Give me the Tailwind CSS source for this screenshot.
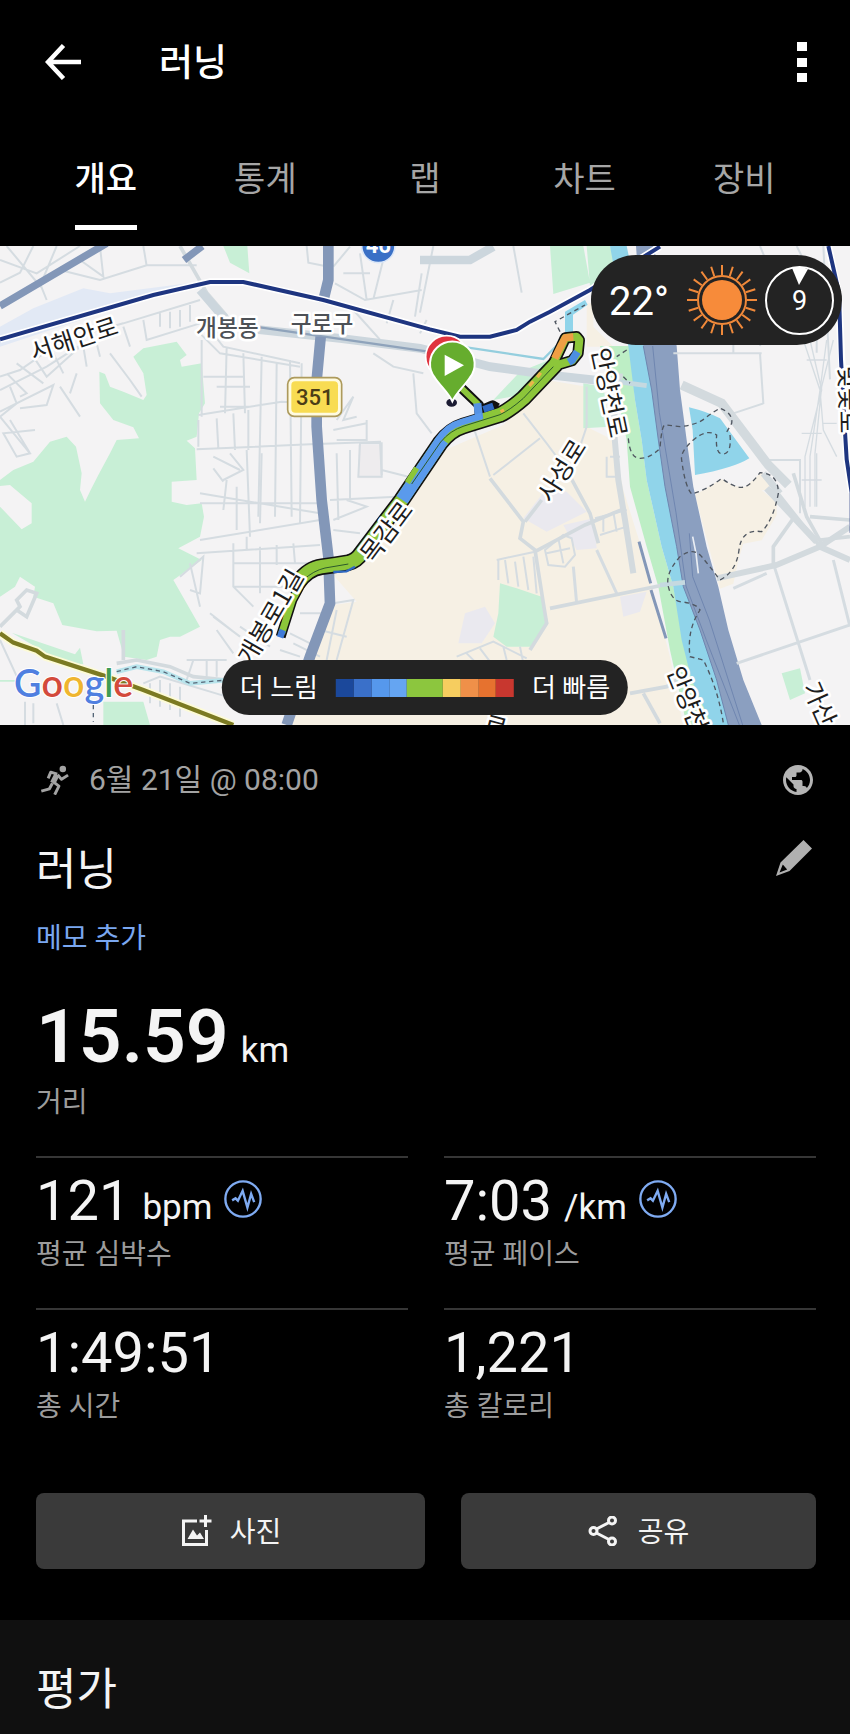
<!DOCTYPE html>
<html lang="ko">
<head>
    <meta charset="UTF-8">
    <meta name="viewport" content="width=device-width, initial-scale=1.0">
    <title>러닝</title>
    <script src="https://cdn.jsdelivr.net/npm/@tailwindcss/browser@4"></script>
</head>
<body class="bg-black text-[#f4f4f4] font-[Roboto,'Noto_Sans_CJK_KR',sans-serif]">

    <!-- App bar -->
    <header class="flex items-center h-[124px] pl-[41px] pr-[38px]">
        <button aria-label="뒤로" class="w-11 h-11 flex items-center justify-center">
            <svg class="w-9 h-9" viewBox="0 0 36 36" fill="none" stroke="#fff" stroke-width="4.500">
                <path d="M18.500 1.500L3 18l15.500 16.500M3 18h33"/>
            </svg>
        </button>
        <h1 class="ml-[74px] pt-1 text-[37px] leading-[48px] font-medium text-white">러닝</h1>
        <button aria-label="더보기" class="ml-auto w-5 h-11 flex flex-col items-center justify-between py-0.5">
            <span class="w-2.5 h-[9px] bg-white"></span>
            <span class="w-2.5 h-[9px] bg-white"></span>
            <span class="w-2.5 h-[9px] bg-white"></span>
        </button>
    </header>

    <!-- Tabs -->
    <nav class="grid grid-cols-5 px-[26px] pb-4 text-[34px] leading-[40px] text-[#a6a6a6]">
        <button class="flex justify-center h-[106px]"><span class="flex items-center h-full pt-1 border-y-[5px] border-t-transparent border-b-white text-white font-medium">개요</span></button>
        <button class="flex justify-center h-[106px]"><span class="flex items-center h-full pt-1">통계</span></button>
        <button class="flex justify-center h-[106px]"><span class="flex items-center h-full pt-1">랩</span></button>
        <button class="flex justify-center h-[106px]"><span class="flex items-center h-full pt-1">차트</span></button>
        <button class="flex justify-center h-[106px]"><span class="flex items-center h-full pt-1">장비</span></button>
    </nav>

    <!-- Map -->
    <section class="relative overflow-hidden">
        <svg class="block w-full" viewBox="0 18 2550 1437" font-family="'Noto Sans CJK KR',sans-serif">
            <rect y="18" width="2550" height="1437" fill="#f4f3f4"/>

            <!-- areas -->
            <path fill="#e2e9f5" d="M0 260L100 205 250 145 330 160 600 125 440 175 0 320z"/>
            <path fill="#f6f0e4" d="M1640 420L1760 440v120l80 40 30 150 50 160 90 340 40 205H860l60-190 80-170 70-10-70-80 90-50 210-310 210-90z"/>
            <path fill="#f6f0e4" d="M1760 190l20 0 0 70 60 60-80 0zM2085 765l80-48 40 22 30 2 50-45 30 55-30 0 45 35 0 40-45 75-55 10-15 50-15 70-40 15z"/>
            <path fill="#eae9ef" d="M1640 745l60 10 60 60-120 60-70-40zM1690 855l90-20 10 90-60 5zM1395 1120l60-20 30 50-40 60-70 0zM1860 1070l80-15-20 60-50 15z"/>
            <path fill="#eeecee" d="M1075 615l65 0 5 100-70 0z"/>
            <g fill="#c8efd6">
                <path d="M400 350L430 325 530 305 560 345 540 360 545 380 605 370 615 490 597 520 590 590 560 602 585 625 590 720 515 725 515 785 560 795 605 790 612 830 600 890 535 925 605 960 520 1020 600 1160 540 1190 510 1190 480 1200 470 1250 440 1260 372 1250 350 1172 290 1174 187 1155 160 1090 100 1070 105 1040 60 1010 45 1040 0 1070V800L65 868 95 850 95 790 30 735 0 738V720L40 690 100 665 150 605 200 590 228 620 245 700 240 750 255 785 272 750 295 705 330 640 350 600 417 595 400 562 340 540 300 490 298 395 315 402 330 440 370 455 430 480 440 465 430 400z"/>
                <path d="M670 18h72l6 82-58-32zM1650 18h100l20 110-110 34zM1760 18h70l20 60-80 60z"/>
                <path d="M1480 480l80-85 100-40 20 20-120 90zM1750 430l60 10 20 120-80 5z"/>
                <path d="M1500 1030l50 15 75 25 20 80-50 70-75 0-40-30 15-70zM2345 1300l55-15 15 75-45 20z"/>
                <path d="M310 1385l120 0 20 70-140 0zM0 1320h60v5H0zM35 1178l190 65 15-20 10 50-60-5z"/>
                <path fill="#bdeec5" d="M1800 318L1890 318 1905 480 1925 600 1940 720 1985 920 2020 1040 2060 1220 2110 1340 2140 1455 2060 1455 2010 1230 1975 1040 1940 920 1890 740 1880 600 1855 480z"/>
            </g>

            <!-- river and highway -->
            <path fill="#90d4ea" d="M1830 18L1880 18 1960 400 1995 720 2045 920 2060 1040 2110 1170 2150 1320 2190 1455 2135 1455 2075 1320 2045 1200 2020 1040 1985 920 1940 720 1925 600 1905 480 1885 318zM2067 502Q2120 515 2160 535L2248 655Q2200 685 2085 705L2078 570zM1695 280l0-65 60-35 8 14-44 30 0 56z"/>
            <path fill="#8b9fc0" d="M1908 18L1960 18 2030 318 2040 450 2060 600 2080 740 2120 920 2155 1040 2185 1170 2230 1320 2285 1455 2185 1455 2150 1320 2100 1170 2050 1040 2030 920 1995 740 1975 600 1955 450 1930 318z"/>
            <g fill="none" stroke="#6f86b0" stroke-width="3">
                <path d="M1958 318l20 200 50 300 30 220 60 160 100 257M2068 880l10 130 50 130 100 315M1930 318l25 132 20 150 20 140 35 180 20 120 50 130 50 150 35 135"/>
                <path stroke="#e9edf3" stroke-width="5" d="M2078 890l10 50 7 60"/>
            </g>

            <!-- side streets -->
            <g fill="none" stroke="#d5dce1" stroke-width="6">
                <path d="M0 60l110 40 130-82M20 18l100 120 50-120M100 18l-40 80-60 30M240 60l70 50-10-90M120 130l20 50M180 90l120 30 140-44 150 0M430 18l10 60"/>
                <path d="M0 410l60-20 130-90 180-50 230-70M0 450l140-70 110-70M20 400l60 60-20 10M50 370l80 60M100 350l40 60 100-90M160 340l30 60M250 320l10 60M290 310l10 40M330 340l60 80 35 50M370 260l20 60M430 240l10 60 160-50M480 220v40M510 215v50M540 210v50M570 195v50"/>
                <path d="M30 440l20 50-50 40M0 515l160-80-20 60-80 10M180 440l60 90M230 400l-20 60M0 530l90 110-40 10-40-70 95-10M30 540l60 100"/>
                <path d="M630 270l40 50 230 50M600 280l60 60 240 40M605 300v230M680 320l-5 200M730 340l5 180M785 350l-10 480M830 370l-5 460M870 360l5 470M905 370l-5 480M610 410h120M650 440h100M660 500h90M595 525l250-40 90 5M595 540v80M590 628l340-15 210-8 5 100M650 535l5 90M700 520l5 110M745 510v120"/>
                <path d="M740 630l10 260M785 640l-5 210M640 650l80 40M640 685l30 40M690 640l40 50-60 30M600 760l360 60M600 790h360M680 720l-10 90M710 740v130M600 900l360-60M590 940l370-25M700 910v130l60 60M740 890v40M700 970h260M780 920v140M830 915v60M880 910l5 60M700 1040l200 0"/>
                <path d="M1010 540l50-70-30 70 40-10M1000 570l100-20M1010 600h90v-60M1010 640l5 200M1050 630v150M1080 610h65v100h-70zM1145 690l80 20M990 780l200-10M1000 840l100-40-60-20M1000 870l80 10M640 1130l80 60-90-70M650 1170l50 70M720 1160l90 60M600 1100l-30-130M540 1010l70-60-10 110-30-10"/>
                <path d="M870 1180l80 40M1000 1090l60-10-50 180M900 1120l80 0M880 1210l80 40M1010 1110l-30 150M960 1170l80 20M840 1230l60 20"/>
                <path d="M1005 130l90 50 170-30M1030 100h80M1000 80l50-60M1080 40l20 140M1160 18l-40 160M920 18l5 50 50 10M1180 180l-20 70M1060 210l90 100M1265 100l-20 130M1120 340l60 40 90 20M1240 400l10 120 45 60"/>
                <path d="M0 1200l60 130M75 1385v70M100 1390v60M170 1390l20 65M430 1330l50-20 200 60M450 1330v60M480 1320v80M510 1330v80M540 1340v90M560 1260h120M580 1260l-20 60M620 1260v50M650 1260v50"/>
                <path d="M2280 18l50 120-50 180M2020 340h265M2280 340l10 150-90 30M2200 280l0 60M2290 660l110 0v160M2390 18l60 120v200M2470 18l20 400"/>
                <path stroke-width="4" d="M2410 300l50 150 10 120 40 80M2430 300l35 150-50 200v150M2480 300l-20 150-30 200v150M2500 300l-35 140-20 200v160M2450 640v160M2405 580h60M2470 550h40M2420 360h60M2405 720h60"/>
                <path d="M1280 240l-20 40M1300 18l-40 200M1540 18l25 140M1420 560l50 150M1480 705l140-110M1570 520l70 90 60 80M1830 650h30M1820 650v60h30M1760 440v120l-20 60"/>
                <path d="M1490 960l115-25M1495 1020v-60M1525 1030l-10-70M1555 1040l-10-75M1585 1050l-15-100M1610 1060l-10-110M1785 835l95-25M1800 885l80-25M1810 825v50M1840 815l10 60M1870 800l5 60M1370 1250l110-45 100 50M1400 1240l30 30M1440 1225l30 40M1510 1220l10 40M1560 1220l10 50"/>
                <path d="M1635 930l55-45 25 10 10 50-30 35-50-5zM1640 940l70-15M1675 895l15 75"/>
                <path stroke-width="9" d="M2200 1045l100-45M2500 960l50 200M2320 970l110 350M2210 1270l340-115M1720 980l10 110M1850 1060l-60-130"/>
            </g>
            <g fill="none" stroke="#d3dade" stroke-width="11">
                <path d="M1470 715l100 130-10 50 45 35 25 160 10 60-50 80M1575 845l50-65M1605 935l150-80 120-50M1700 690l70 130 25 90M1650 1105l340-70"/>
                <path stroke-width="18" d="M1900 1000l-25-160-20-120-15-170 20-150M2150 1015l180-40 130-55 90-60M2460 920l90 40"/>
                <path d="M2320 970v-50l60-85M2430 830l120 10M2460 900l90-10M2310 730l150 190M2380 700l40 130 50 90"/>
                <path stroke-width="20" d="M2290 700l50 60M2300 745l150 160"/>
                <path d="M540 18l80 140 60 70M370 1260v-90M350 1270l60-10 100 20 70 30 100 10M0 1160l60-60-10-20 30-30 30 10-30 70-30-20"/>
                <path stroke-width="28" d="M2045 435l120 55 140 185 60 60"/>
                <path d="M1890 1360l110-20 30-20M1930 1360l50 90"/>
            </g>
            <path fill="none" stroke="#c5d9e0" stroke-width="14" d="M1780 415l160 22M1980 1035l75-8"/>
            <g fill="none" stroke="#ccd6dd" stroke-width="26">
                <path d="M740 265l280 30 240 30 210 55 180 25 150 17M600 150l60 70 50 50M1260 60l150 0 70-40"/>
                <path stroke="#8fa3bb" stroke-width="7" d="M780 262l500 72"/>
                <path stroke="#94cede" stroke-width="7" d="M1400 322l230 35 60-60"/>
            </g>
            <g fill="none" stroke="#8397b8">
                <path stroke-width="22" d="M0 198L320 10M552 60l55-42"/>
                <path stroke-width="32" d="M985 18L985 120 968 190M962 290L950 420 950 560 965 780 985 950 990 1090 930 1250 860 1455"/>
                <path stroke-width="9" d="M1917 905l35 125M1953 1050l45 145"/>
            </g>

            <!-- footpaths -->
            <g fill="none" stroke="#4f5660" stroke-width="4" stroke-dasharray="14 11" transform="translate(1770 240)">
                <path d="M115 355Q120 415 150 415T210 385Q215 315 225 315T270 320Q320 315 345 295T390 265Q430 280 425 310L405 345"/>
                <path d="M420 345Q425 400 400 402T380 345Q350 325 310 360T275 420Q285 500 305 522Q350 510 395 475Q425 498 450 502T510 458Q565 460 565 520Q550 600 515 635Q455 625 447 690T390 780Q360 740 335 710T270 710Q225 760 235 800T270 845Q320 850 330 870Q290 930 300 1010L340 1020Q385 1110 400 1210"/>
                <path d="M-90 35l-15-30 90-50M110 90l-30 20M100 170l20 20"/>
            </g>
            <path fill="none" stroke="#b8e4ec" stroke-width="14" d="M350 1295l60-15 80 15 80 35 110-10"/>
            <path fill="none" stroke="#567" stroke-width="4" stroke-dasharray="13 11" d="M350 1295l60-15 80 15 80 35 110-10M280 1395v50"/>

            <!-- rail lines -->
            <g fill="none">
                <path stroke="#fff" stroke-width="22" d="M0 298L460 165 630 126H730L970 180 1290 268 1380 290H1470L1550 270 1590 245 1650 215 1770 150 1980 20M2485 18l30 140 10 200 10 150 5 150 15 100"/>
                <path stroke="#1e3580" stroke-width="12" d="M0 298L460 165 630 126H730L970 180 1290 268 1380 290H1470L1550 270 1590 245 1650 215 1770 150 1980 20M2485 18l32 140 6 200 8 150 9 150 15 100v120"/>
                <path stroke="#fdfbd6" stroke-width="24" d="M0 1180L40 1208 110 1232 135 1250 320 1310 430 1350 700 1455"/>
                <path stroke="#7b7a22" stroke-width="13" d="M0 1180L40 1208 110 1232 135 1250 320 1310 430 1350 700 1455"/>
            </g>

            <!-- run track -->
            <g fill="none" stroke-linejoin="round">
                <path stroke="#111" stroke-width="30" d="M842 1190l35-110 40-75"/>
                <path stroke="#8cc63a" stroke-width="21" d="M845 1180l32-100 40-75"/>
                <path stroke="#3f7ad8" stroke-width="20" d="M840 1192l8-22"/>
                <path stroke="#111" stroke-width="30" d="M1385 445l52 50 2 30M1450 508l28-12 14 8"/>
                <path stroke="#111" stroke-width="50" d="M893 1028Q925 985 965 980T1045 968Q1070 962 1085 938L1205 780 1320 610Q1350 570 1390 558T1500 524Q1530 510 1570 475L1668 372"/>
                <path stroke="#111" stroke-width="34" stroke-linecap="round" d="M1650 392l32-68 14-30 34-4 8 10-4 40-18 22-40 12z"/>
                <path stroke="#8cc63a" stroke-width="40" d="M893 1028Q925 985 965 980T1045 968Q1070 962 1085 938L1205 780 1320 610Q1350 570 1390 558T1500 524Q1530 510 1570 475L1668 372"/>
                <path stroke="#8cc63a" stroke-width="18" d="M1385 445l50 48"/>
                <path stroke="#5592e4" stroke-width="24" d="M1432 490l6 48"/>
                <path stroke="#2f69c4" stroke-width="20" d="M1450 508l30-10"/>
                <path stroke="#5a9aec" stroke-width="40" d="M1206 779l114-169 8-11"/>
                <path stroke="#8cc63a" stroke-width="17" d="M1222 728l28-44"/>
                <path stroke="#5a9aec" stroke-width="20" d="M1312 603Q1342 558 1380 548L1445 528"/>
                <path stroke="#8cc63a" stroke-width="24" stroke-linecap="round" d="M1650 392l32-68 14-30 34-4 8 10-4 40-18 22-40 12z"/>
                <path stroke="#ef9f45" stroke-width="22" d="M1664 355l20-40 12-22 24-2"/>
                <path stroke="#eab54c" stroke-width="10" d="M1612 412l10-14M1588 438l12-14M1502 516l10-6"/>
                <path stroke="#4c8ee2" stroke-width="23" d="M1732 335l-16 26-10 6"/>
                <path stroke="#2c5a2a" stroke-width="3" d="M910 1020Q940 992 975 984L1045 972M1235 732L1322 606Q1350 572 1392 558L1500 524Q1530 510 1570 475L1660 380"/>
                <path stroke="#2f69c4" stroke-width="7" d="M1000 996l40-2 25-14"/>
            </g>

            <!-- start and finish pins -->
            <ellipse cx="1355" cy="488" rx="16" ry="12" fill="#1b1b33"/>
            <circle cx="1340" cy="350" r="63" fill="#e03440" stroke="#fff" stroke-width="5"/>
            <path fill="#66ad2e" stroke="#fff" stroke-width="6" d="M1357 484c-12-26-36-46-52-70a67 67 0 1 1 104 0c-16 24-40 44-52 70z"/>
            <path fill="#fff" d="M1334 344v64l58-32z"/>

            <!-- road shields -->
            <circle cx="1135" cy="18" r="50" fill="#3a70c6" stroke="#dbe7f8" stroke-width="5"/>
            <text x="1135" y="38" text-anchor="middle" font-family="Roboto" font-weight="700" font-size="66" fill="#fff">46</text>
            <rect x="863" y="413" width="162" height="116" rx="20" fill="#fffbe0" stroke="#ad9a5c" stroke-width="5"/>
            <rect x="874" y="424" width="140" height="94" rx="12" fill="#f8dc52"/>
            <text x="944" y="496" text-anchor="middle" font-family="Roboto" font-weight="500" font-size="66" fill="#4b3d16">351</text>

            <!-- labels -->
            <g font-size="74" fill="#1d1d1d" stroke="#fff" stroke-width="16" stroke-linejoin="round" paint-order="stroke" text-anchor="middle">
                <g fill="#4d5156" font-size="68" font-weight="500">
                    <text x="682" y="288">개봉동</text>
                    <text x="966" y="275">구로구</text>
                </g>
                <text transform="translate(222 298) rotate(-18)" y="26">서해안로</text>
                <text transform="translate(1828 458) rotate(78)" y="26">안양천로</text>
                <text transform="translate(1686 692) rotate(-58)" y="26">사성로</text>
                <text transform="translate(1160 876) rotate(-53)" y="26">목감로</text>
                <text transform="translate(812 1130) rotate(-60)" y="26">개봉로1길</text>
                <text transform="translate(2062 1378) rotate(68)" y="26">안양천</text>
                <text transform="translate(2458 1392) rotate(66)" y="26">가산</text>
                <text transform="translate(1486 1460) rotate(15)" y="26">로</text>
                <text transform="translate(2545 478) rotate(89)" y="26">벚꽃로</text>
            </g>
            <text x="42" y="1372" font-family="Lato" font-weight="600" font-size="113" stroke="#fff" stroke-width="6" paint-order="stroke"><tspan fill="#4f7fe0">G</tspan><tspan fill="#d34a3c">o</tspan><tspan fill="#efb52f">o</tspan><tspan fill="#4f7fe0">g</tspan><tspan fill="#3f9b55">l</tspan><tspan fill="#d34a3c">e</tspan></text>
        </svg>

        <!-- weather -->
        <div class="absolute top-[9px] right-2 flex items-center h-[90px] pl-[18px] pr-2 rounded-full bg-[#232323] text-white">
            <span class="pt-1 text-[40px] leading-[48px]">22°</span>
            <svg class="w-[70px] h-[70px] ml-[18px]" viewBox="-35 -35 70 70" fill="none" stroke="#f0893a" stroke-width="2">
                <circle r="20" fill="#f78b3a" stroke="none"/>
                <circle r="24"/>
                <path id="ray" d="M0-25V-35M0 25V35M-25 0H-35M25 0H35"/>
                <use href="#ray" transform="rotate(18)"/>
                <use href="#ray" transform="rotate(36)"/>
                <use href="#ray" transform="rotate(54)"/>
                <use href="#ray" transform="rotate(72)"/>
            </svg>
            <div class="relative ml-2 w-[69px] h-[69px] rounded-full border-2 border-white flex items-center justify-center pt-0.5 text-[27px]">
                <svg class="absolute top-0 w-5 h-[17px]" viewBox="0 0 20 17"><path d="M2 0Q10-2 18 1L9 17z" fill="#fff"/></svg>
                9
            </div>
        </div>

        <!-- pace legend -->
        <div class="absolute bottom-2.5 left-1/2 -translate-x-1/2 flex items-center gap-[18px] h-[55px] px-[18px] rounded-full bg-[#232323] text-white text-[26px] whitespace-nowrap">
            <span class="pt-0.5">더 느림</span>
            <div class="grid grid-cols-10 w-[178px] h-[18px]">
                <span class="bg-[#1b489b]"></span>
                <span class="bg-[#3a70c9]"></span>
                <span class="bg-[#5698ec]"></span>
                <span class="bg-[#65a5f2]"></span>
                <span class="bg-[#8cc63e] col-span-2"></span>
                <span class="bg-[#f6cd5f]"></span>
                <span class="bg-[#ef9049]"></span>
                <span class="bg-[#e6722f]"></span>
                <span class="bg-[#c8372f]"></span>
            </div>
            <span class="pt-0.5">더 빠름</span>
        </div>
    </section>

    <!-- Activity summary -->
    <main class="pt-[35px]">
        <div class="pl-9 pr-[34px]">
            <div class="flex items-center h-10 text-[#a3a3a3]">
                <svg class="w-[30px] h-[30px] ml-1" viewBox="118 118 90 92" fill="none" stroke="currentColor" stroke-width="9" stroke-linejoin="round">
                    <circle cx="187" cy="130" r="10" fill="currentColor" stroke="none"/>
                    <path d="M142 159l8-19 20 6"/>
                    <path stroke-width="17" d="M169 147l-13 26"/>
                    <path d="M171 148l12 14 20-13M158 170l17 13-13 26M155 174l-9 17-25 7"/>
                </svg>
                <span class="ml-[19px] text-3xl leading-10">6월 21일 @ 08:00</span>
                <svg class="ml-auto w-9 h-9" viewBox="0 0 24 24" fill="#b4b4b4">
                    <path d="M12 2C6.480 2 2 6.480 2 12s4.480 10 10 10 10-4.480 10-10S17.520 2 12 2zm-1 17.930c-3.950-.490-7-3.850-7-7.930 0-.620.080-1.210.210-1.790L9 15v1c0 1.100.900 2 2 2v1.930zm6.900-2.540c-.260-.810-1-1.390-1.900-1.390h-1v-3c0-.550-.450-1-1-1H8v-2h2c.550 0 1-.450 1-1V7h2c1.100 0 2-.900 2-2v-.410c2.930 1.190 5 4.060 5 7.410 0 2.080-.800 3.970-2.100 5.390z"/>
                </svg>
            </div>

            <div class="mt-10 flex justify-between">
                <h2 class="pt-0.5 text-[44px] leading-[56px]">러닝</h2>
                <button aria-label="편집" class="w-9 h-9 mr-1">
                    <svg class="w-9 h-9" viewBox="0 0 36 36">
                        <path fill="#b0b0b0" fill-rule="evenodd" d="M27.500 0L36 8.500 13.500 31 0 36 4.500 22.500zM6.800 24.500L3.500 32.500 11.200 29.500z"/>
                    </svg>
                </button>
            </div>

            <a href="#" class="block w-max mt-[21px] text-[28px] leading-10 text-[#7aa7f0]">메모 추가</a>

            <div class="mt-[37px] flex items-baseline gap-3 leading-[80px]">
                <span class="text-[75px] font-semibold">15.59</span>
                <span class="text-[35px] leading-10">km</span>
            </div>
            <div class="mt-[7px] text-[28px] leading-10 text-[#9c9c9c]">거리</div>

            <div class="mt-[33px] grid grid-cols-2 gap-x-9">
                <div class="border-t-2 border-[#363636] pt-2.5 pb-[33px]">
                    <div class="flex gap-3 h-16">
                        <span class="text-[56px] leading-[66px]">121</span>
                        <span class="text-[35px] leading-[80px]">bpm</span>
                        <svg class="w-[38px] h-[38px] mt-3" viewBox="0 0 112 112" fill="none" stroke="#7fabf2" stroke-width="7">
                            <circle cx="56" cy="56" r="52"/>
                            <path d="M24 60l10-6 7 7L55 32l14 49 11-40 9 24"/>
                        </svg>
                    </div>
                    <div class="mt-[3px] text-[28px] leading-10 text-[#9c9c9c]">평균 심박수</div>
                </div>
                <div class="border-t-2 border-[#363636] pt-2.5 pb-[33px]">
                    <div class="flex gap-3 h-16">
                        <span class="text-[56px] leading-[66px]">7:03</span>
                        <span class="text-[35px] leading-[80px]">/km</span>
                        <svg class="w-[38px] h-[38px] mt-3" viewBox="0 0 112 112" fill="none" stroke="#7fabf2" stroke-width="7">
                            <circle cx="56" cy="56" r="52"/>
                            <path d="M24 60l10-6 7 7L55 32l14 49 11-40 9 24"/>
                        </svg>
                    </div>
                    <div class="mt-[3px] text-[28px] leading-10 text-[#9c9c9c]">평균 페이스</div>
                </div>
                <div class="border-t-2 border-[#363636] pt-2.5 pb-[33px]">
                    <div class="h-16 text-[56px] leading-[66px]">1:49:51</div>
                    <div class="mt-[3px] text-[28px] leading-10 text-[#9c9c9c]">총 시간</div>
                </div>
                <div class="border-t-2 border-[#363636] pt-2.5 pb-[33px]">
                    <div class="h-16 text-[56px] leading-[66px]">1,221</div>
                    <div class="mt-[3px] text-[28px] leading-10 text-[#9c9c9c]">총 칼로리</div>
                </div>
            </div>
        </div>

        <!-- Actions -->
        <div class="mt-[33px] grid grid-cols-2 text-[28px] leading-10">
            <div class="pl-9">
                <button class="w-full h-[76px] rounded-lg bg-[#3a3a3a] flex items-center justify-center gap-[18px]">
                    <svg class="w-8 h-8" viewBox="0 0 32 32" fill="none" stroke="#f4f4f4" stroke-width="3">
                        <path d="M17 6H3.500v23.500h23V15M25.500 0v12M19.500 6h12"/>
                        <path fill="#f4f4f4" stroke="none" d="M7.500 24l5.500-9.500 4 6 3-3 4 6.500z"/>
                    </svg>
                    <span class="pt-1">사진</span>
                </button>
            </div>
            <div class="pl-9 pr-[34px]">
                <button class="w-full h-[76px] rounded-lg bg-[#3a3a3a] flex items-center justify-center gap-5">
                    <svg class="w-[30px] h-[30px]" viewBox="0 0 30 30" fill="none" stroke="#f4f4f4" stroke-width="3">
                        <circle cx="5.500" cy="15" r="3.500"/>
                        <circle cx="24" cy="4.500" r="3.500"/>
                        <circle cx="24" cy="25.500" r="3.500"/>
                        <path d="M8.500 13L21 6.500M8.500 17L21 23.500"/>
                    </svg>
                    <span class="pt-1">공유</span>
                </button>
            </div>
        </div>
    </main>

    <section class="mt-[51px] pt-[42px] pb-4 pl-9 pr-[34px] bg-[#101010]">
        <h2 class="text-[44px] leading-[56px]">평가</h2>
    </section>

</body>
</html>
